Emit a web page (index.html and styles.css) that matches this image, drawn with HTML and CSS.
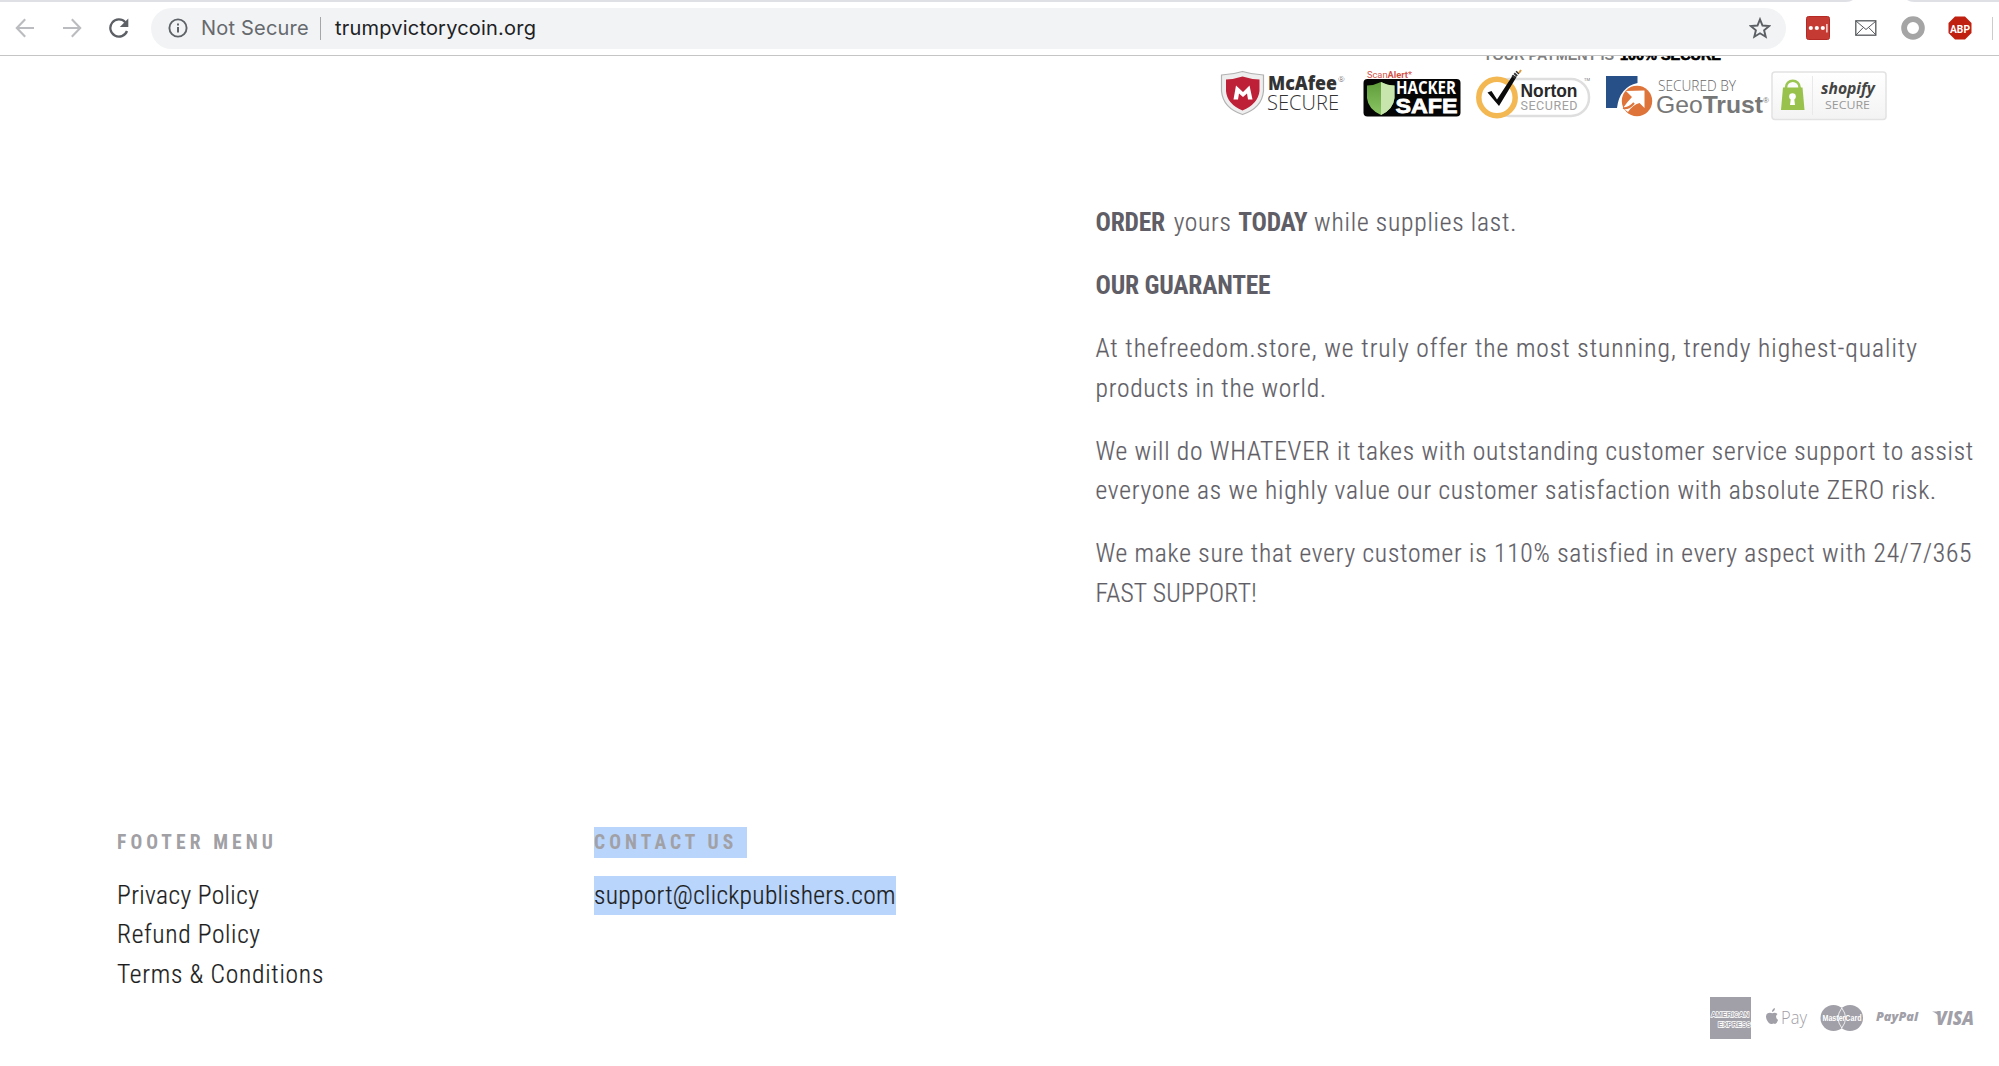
FILE: index.html
```html
<!DOCTYPE html>
<html lang="en">
<head>
<meta charset="utf-8">
<title>trumpvictorycoin.org</title>
<link rel="stylesheet" href="styles.css">
</head>
<body>
<header class="toolbar">
  <svg class="tabline" viewBox="0 0 1999 4" width="1999" height="4"><path d="M0 0H1853Q1850 2 1846 2H0ZM1999 0H1907Q1910 2 1914 2H1999Z" fill="#dfe0e6"/></svg>
  <nav class="nav">
    <svg width="20" height="20" viewBox="0 0 20 20" fill="none" stroke="#bbbcc0" stroke-width="2.100"><path d="M19 10H2M10.200 1.300L1.800 10l8.400 8.700"/></svg>
    <svg width="20" height="20" viewBox="0 0 20 20" fill="none" stroke="#bbbcc0" stroke-width="2.100"><path d="M1 10h17M9.800 1.300L18.200 10l-8.400 8.700"/></svg>
    <svg width="20" height="20" viewBox="0 0 20 20"><path d="M16.300 4.200A8.600 8.600 0 1 0 18 13" fill="none" stroke="#5c5f64" stroke-width="2.300"/><path d="M19.300.5V9h-8.500Z" fill="#5c5f64"/></svg>
  </nav>
  <div class="address">
    <svg width="20" height="20" viewBox="0 0 20 20"><circle cx="10" cy="10" r="8.600" fill="none" stroke="#5f6368" stroke-width="1.900"/><path d="M9 9h2v5.500H9zM9 5.500h2v2H9z" fill="#5f6368"/></svg>
    <span class="insecure">Not Secure</span>
    <span class="divider"></span>
    <span class="url">trumpvictorycoin.org</span>
    <svg class="star" width="22" height="22" viewBox="0 0 22 22"><path d="M11 2.300l2.500 6.200 6.700.5-5.100 4.300 1.600 6.500-5.700-3.500-5.700 3.500 1.600-6.500L1.800 9l6.700-.5Z" fill="none" stroke="#5c5f64" stroke-width="1.900"/></svg>
  </div>
  <div class="extensions">
    <svg width="24" height="24" viewBox="0 0 24 24"><rect x=".5" y=".5" width="23" height="23" rx="2" fill="#c53a32" stroke="#b52a24"/><g fill="#fff"><circle cx="4.800" cy="12" r="2.100"/><circle cx="10.800" cy="12" r="2.100"/><circle cx="16.800" cy="12" r="2.100"/><path d="M20.300 8h1.200v8.500h-1.200z"/></g></svg>
    <svg width="22" height="16" viewBox="0 0 22 16" fill="none" stroke="#55585c"><rect x=".8" y=".8" width="20" height="14.400" stroke-width="1.300"/><path d="M1 1l10 8.500L21 1M1 15l7.300-7.500M21 15l-7.300-7.500" stroke-width="1"/></svg>
    <svg width="24" height="24" viewBox="0 0 24 24"><circle cx="12" cy="12" r="8.900" fill="none" stroke="#a5a5a5" stroke-width="5.800"/></svg>
    <svg width="24" height="24" viewBox="0 0 24 24"><path d="M7 .5h10L23.500 7v10L17 23.500H7L.5 17V7Z" fill="#c0200f"/><text x="2" y="16.500" class="abp" textLength="20" lengthAdjust="spacingAndGlyphs">ABP</text></svg>
    <span class="edge"></span>
  </div>
</header>

<main class="product">
  <svg class="seals" width="680" height="70" viewBox="1216 56 680 70">
    <defs>
      <linearGradient id="box" x1="0" y1="0" x2="0" y2="1"><stop offset="0" stop-color="#fff"/><stop offset="1" stop-color="#f3f3f3"/></linearGradient>
      <linearGradient id="leaf" x1="0" y1="0" x2="0" y2="1"><stop offset="0" stop-color="#5f9c3a"/><stop offset="1" stop-color="#8cc665"/></linearGradient>
    </defs>
    <g class="bold">
      <text x="1483" y="60" font-size="14" fill="#808080" textLength="131" lengthAdjust="spacingAndGlyphs">YOUR PAYMENT IS</text>
      <text x="1620" y="60" font-size="14" fill="#000" stroke="#000" stroke-width=".7" textLength="101" lengthAdjust="spacingAndGlyphs">100% SECURE</text>
    </g>
    <path d="M1221.500 75Q1233 74.500 1242.500 71.500 1252 74.500 1263.500 75V91Q1262 108 1242.500 114.500 1223 108 1221.500 91Z" fill="#eee" stroke="#b2b2b2" stroke-width="1.200"/>
    <path d="M1226 79.500Q1235 79 1242.500 76.500 1250 79 1259.500 79.500V91Q1258 104 1242.500 110.500 1227 104 1226 91Z" fill="#bd2037"/>
    <path d="M1233.500 99.500l2.500-14 7 6.500 6.500-6.500 3 14h-4.500l-1-6-4 3.500-4-3.500-1 6Z" fill="#fff"/>
    <text x="1268" y="90" class="open" font-size="19" font-weight="800" fill="#333" textLength="69" lengthAdjust="spacingAndGlyphs">McAfee</text>
    <text x="1338" y="82" class="open" font-size="8" fill="#555">®</text>
    <text x="1267" y="109.500" class="open" font-size="19.500" fill="#333" textLength="72" lengthAdjust="spacingAndGlyphs">SECURE</text>

    <text x="1367" y="77.500" class="roboto" font-size="9" fill="#d35348" textLength="45" lengthAdjust="spacingAndGlyphs">Scan<tspan font-weight="700">Alert</tspan>*</text>
    <rect x="1363.500" y="79" width="97" height="37.500" rx="4" fill="#050505"/>
    <path d="M1381 82q7 3.500 13.500 3.500V98q-1 11-13.500 17-13-6-14-17V85.500q7 0 14-3.500Z" fill="url(#leaf)"/>
    <path d="M1381 82q7 3.500 13.500 3.500V98q-1 11-13.500 17Z" fill="#c9e5ae"/>
    <text x="1396" y="94" class="open" font-size="17" font-weight="700" fill="#fff" textLength="60" lengthAdjust="spacingAndGlyphs">HACKER</text>
    <text x="1395.500" y="113" class="bold" font-size="21" fill="#fff" stroke="#fff" stroke-width=".8" textLength="62" lengthAdjust="spacingAndGlyphs">SAFE</text>

    <rect x="1491" y="79" width="98" height="37" rx="18" fill="#fff" stroke="#dedede" stroke-width="2.500"/>
    <circle cx="1497" cy="97.500" r="18.200" fill="#fff" stroke="#f3b851" stroke-width="5.500"/>
    <path d="M1487.500 92.500l4-1.500 5.500 8.500 16-24.500 3.500 2L1499 106Z" fill="#0b0b0b"/>
    <path d="M1513 77.500l5-5.500" stroke="#333" stroke-width="4" stroke-dasharray="2 1"/><path d="M1519 73l2-3" stroke="#d99a42" stroke-width="2"/>
    <text x="1520.500" y="96.500" class="bold" font-size="17.500" fill="#292929" textLength="57" lengthAdjust="spacingAndGlyphs">Norton</text>
    <text x="1520.500" y="110" class="roboto" font-size="12.500" fill="#a0a0a0" textLength="57">SECURED</text>
    <text x="1584" y="81" class="roboto" font-size="4" fill="#777">TM</text>

    <path d="M1606 76h31.500v7q-18 4-20.500 25h-11Z" fill="#285088"/>
    <circle cx="1637" cy="101" r="15.200" fill="#de7439"/>
    <path d="M1626 91l18.500-.5V108l-5-5q-7 2-11.500 9l-5-4q5-7 9-11Z" fill="#fff"/>
    <path d="M1623 108q6 1 11-5" fill="none" stroke="#de7439" stroke-width="2"/>
    <text x="1658" y="90.500" class="open" font-size="14.500" fill="#666" textLength="78" lengthAdjust="spacingAndGlyphs">SECURED BY</text>
    <text x="1656" y="112.500" class="sans" font-size="24" fill="#777" textLength="107" lengthAdjust="spacingAndGlyphs">Geo<tspan font-weight="700">Trust</tspan></text>
    <text x="1763" y="103" class="sans" font-size="8" fill="#777">®</text>

    <rect x="1772" y="72" width="114" height="47.500" rx="3" fill="url(#box)" stroke="#e2e2e2" stroke-width="1.500"/>
    <path d="M1812.500 76v39" stroke="#e9e9e9"/>
    <path d="M1786 90v-2.500a6.800 6.800 0 0 1 13.600 0V90" fill="none" stroke="#9cc653" stroke-width="2.600"/>
    <path d="M1783 87.500h19.500l2 22.500h-23.500Z" fill="#98c24b"/>
    <circle cx="1792.500" cy="96.500" r="3.300" fill="#fff"/><path d="M1791 97h3l1 8h-5Z" fill="#fff"/>
    <text x="1821" y="94" class="open" font-size="16" font-weight="700" font-style="italic" fill="#444" textLength="54" lengthAdjust="spacingAndGlyphs">shopify</text>
    <text x="1825" y="109" class="open" font-size="11.500" font-weight="500" fill="#999" textLength="45" lengthAdjust="spacingAndGlyphs">SECURE</text>
  </svg>

  <section class="description">
    <p><b>ORDER</b> <span class="t-yours">yours</span> <b>TODAY</b> <span class="t-while">while supplies last.</span></p>
    <p><b>OUR GUARANTEE</b></p>
    <p><span class="t-at">At thefreedom.store, we truly offer the most stunning, trendy highest-quality</span><br><span class="t-products">products in the world.</span></p>
    <p><span class="t-will">We will do WHATEVER it takes with outstanding customer service support to assist</span><br><span class="t-everyone">everyone as we highly value our customer satisfaction with absolute ZERO risk.</span></p>
    <p><span class="t-make">We make sure that every customer is 110% satisfied in every aspect with 24/7/365</span><br><span class="t-fast">FAST SUPPORT!</span></p>
  </section>
</main>

<footer class="footer">
  <section class="menu">
    <h2>FOOTER MENU</h2>
    <ul><li class="t-privacy">Privacy Policy</li><li class="t-refund">Refund Policy</li><li class="t-terms">Terms &amp; Conditions</li></ul>
  </section>
  <section class="contact">
    <h2><span class="selected">CONTACT US</span></h2>
    <div class="selected email">support@clickpublishers.com</div>
  </section>
  <svg class="payments" width="270" height="46" viewBox="1707 995 270 46" fill="#a1a0a8">
    <rect x="1710" y="997" width="41" height="42"/>
    <g class="bold" fill="#a1a0a8" stroke="#fff" stroke-width="1.500" paint-order="stroke"><text x="1711" y="1017" font-size="8" textLength="38" lengthAdjust="spacingAndGlyphs">AMERICAN</text><text x="1718" y="1026.500" font-size="8" textLength="33" lengthAdjust="spacingAndGlyphs">EXPRESS</text></g>
    <path d="M1772.300 1013.300q2.800-1.500 5.200.7-3.200 2.900.6 6-1.300 3.600-3 3.900-1.300-.8-3.200 0-3 .4-5.200-4.200-1.800-4.600 1-6.400 2-1 4.600 0ZM1771.900 1012.100q.2-3.200 3-4 .1 3.400-3 4Z"/>
    <text x="1781" y="1023.500" class="light" font-size="19" textLength="26" lengthAdjust="spacingAndGlyphs">Pay</text>
    <circle cx="1833.500" cy="1018" r="13"/><circle cx="1850" cy="1018" r="13"/>
    <path d="M1841.800 1008q7.500 10 0 20-7.500-10 0-20Z" fill="none" stroke="#fff" stroke-width=".8"/>
    <text x="1822.500" y="1021" class="bold" font-size="8.500" fill="#fff" textLength="39" lengthAdjust="spacingAndGlyphs">MasterCard</text>
    <text x="1876" y="1021" class="open" font-size="13" font-weight="800" font-style="italic" textLength="42" lengthAdjust="spacingAndGlyphs">PayPal</text>
    <path d="M1932 1011.500h6l3 8q-3-6-9-8Z"/>
    <text x="1936" y="1025" class="open" font-size="18.500" font-weight="800" font-style="italic" textLength="38" lengthAdjust="spacingAndGlyphs">VISA</text>
  </svg>
</footer>
</body>
</html>
```
FILE: styles.css
```css
* { box-sizing: border-box; }
body {
  margin: 0;
  height: 1066px;
  overflow: hidden;
  background: #fff;
  color: #5f5e66;
  font: 300 25.5px/39.47px Roboto, sans-serif;
  font-stretch: 75%;
}
svg { display: block; flex: none; }

/* Browser toolbar */
.toolbar {
  position: relative;
  display: flex;
  align-items: center;
  height: 56px;
  padding-top: 1px;
  border-bottom: 1px solid #c5c5c6;
}
.tabline { position: absolute; top: 0; left: 0; }
.nav { display: flex; gap: 27px; width: 151px; padding-left: 15px; }
.address {
  display: flex;
  align-items: center;
  width: 1635px;
  height: 41px;
  padding: 0 15px 0 17px;
  border-radius: 21px;
  background: #f1f3f4;
  font: 400 20px/40px Inter, sans-serif;
}
.insecure { width: 119px; margin-left: 13px; color: #66696e; letter-spacing: .2px; white-space: nowrap; }
.divider { width: 1px; height: 23px; background: #a4a6aa; }
.url { margin-left: 14px; color: #202124; letter-spacing: .2px; white-space: nowrap; }
.star { margin-left: auto; }
.extensions { display: flex; align-items: center; padding-left: 20px; }
.extensions svg { margin-right: 23px; }
.extensions svg:nth-child(2) { margin: 0 24px 0 2px; }
.extensions svg:nth-child(4) { margin-right: 20px; }
.edge { width: 1px; height: 23px; background: #ccc; }
.abp { font: 700 11.5px Roboto, sans-serif; fill: #fff; }

/* Seals and description */
.product { height: 756px; }
.seals { margin-left: 1216px; }
.description { padding: 77px 0 0 1095.5px; }
p { margin: 0 0 23.63px; white-space: nowrap; }
p span, li, .email { -webkit-text-stroke: .2px currentColor; }
b { font-weight: 700; letter-spacing: -.23px; }
.t-yours { margin: 0 1px 0 3px; letter-spacing: .7px; }
.t-while { margin-left: 1px; letter-spacing: .77px; }
.t-at { letter-spacing: .98px; }
.t-products { letter-spacing: .76px; }
.t-will { letter-spacing: .765px; }
.t-everyone { letter-spacing: .785px; }
.t-make { letter-spacing: .79px; }
.t-fast { letter-spacing: .25px; }

.bold { font-family: "Liberation Sans", sans-serif; font-weight: 700; }
.sans { font-family: "Liberation Sans", sans-serif; font-stretch: 100%; font-weight: 400; }
.open { font-family: "Open Sans", sans-serif; font-stretch: 100%; }
.roboto { font-family: Roboto, sans-serif; font-stretch: 100%; font-weight: 400; }
.light { font-family: "Open Sans", sans-serif; font-weight: 300; font-stretch: 100%; }

/* Footer */
.footer { display: flex; padding-left: 117px; color: #1c1d1d; }
.menu { width: 477px; padding-top: 15px; }
.contact { padding-top: 15px; }
h2 {
  margin: 0 0 18px;
  color: #a1a0a5;
  font-size: 19.5px;
  font-weight: 700;
  line-height: 31px;
  letter-spacing: 4.1px;
  white-space: nowrap;
}
ul { margin: 0; padding: 0; list-style: none; }
.selected { background: #b9d5fb; }
h2 .selected { display: inline-block; width: 152.5px; height: 31px; vertical-align: top; }
.email { width: 302px; letter-spacing: .3px; white-space: nowrap; }
.t-privacy { letter-spacing: .4px; }
.t-refund { letter-spacing: .65px; }
.t-terms { letter-spacing: .75px; }
.payments { margin: 183px 22px 0 auto; }
```
